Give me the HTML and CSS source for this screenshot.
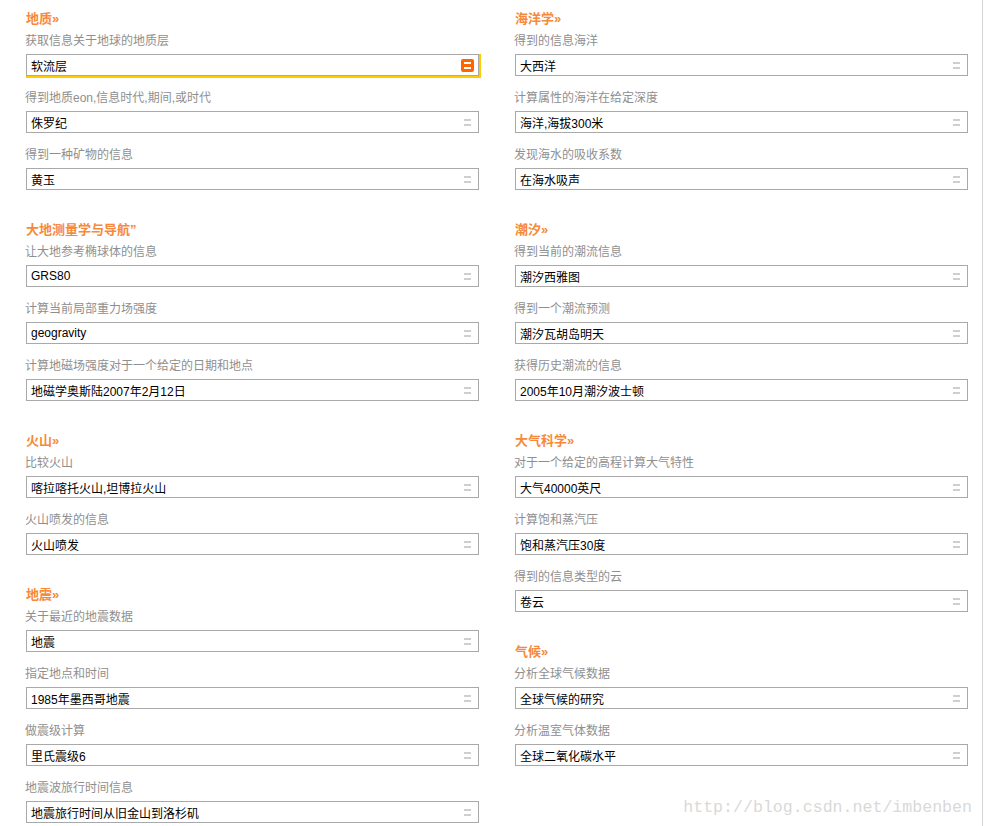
FILE: index.html
```html
<!DOCTYPE html>
<html lang="zh-CN">
<head>
    <meta charset="UTF-8">
    <title>地球科学</title>
    <link rel="stylesheet" href="styles.css">
</head>
<body>
<div class="page">
    <div class="columns">
        <div class="column">
            <div class="section">
                <h3>地质»</h3>
                <div class="field">
                    <label>获取信息关于地球的地质层</label>
                    <div class="box active"><input type="text" value="软流层"><span class="handle"></span></div>
                </div>
                <div class="field">
                    <label>得到地质eon,信息时代,期间,或时代</label>
                    <div class="box"><input type="text" value="侏罗纪"><span class="handle"></span></div>
                </div>
                <div class="field">
                    <label>得到一种矿物的信息</label>
                    <div class="box"><input type="text" value="黄玉"><span class="handle"></span></div>
                </div>
            </div>

            <div class="section">
                <h3>大地测量学与导航”</h3>
                <div class="field">
                    <label>让大地参考椭球体的信息</label>
                    <div class="box"><input type="text" value="GRS80"><span class="handle"></span></div>
                </div>
                <div class="field">
                    <label>计算当前局部重力场强度</label>
                    <div class="box"><input type="text" value="geogravity"><span class="handle"></span></div>
                </div>
                <div class="field">
                    <label>计算地磁场强度对于一个给定的日期和地点</label>
                    <div class="box"><input type="text" value="地磁学奥斯陆2007年2月12日"><span class="handle"></span></div>
                </div>
            </div>

            <div class="section">
                <h3>火山»</h3>
                <div class="field">
                    <label>比较火山</label>
                    <div class="box"><input type="text" value="喀拉喀托火山,坦博拉火山"><span class="handle"></span></div>
                </div>
                <div class="field">
                    <label>火山喷发的信息</label>
                    <div class="box"><input type="text" value="火山喷发"><span class="handle"></span></div>
                </div>
            </div>

            <div class="section">
                <h3>地震»</h3>
                <div class="field">
                    <label>关于最近的地震数据</label>
                    <div class="box"><input type="text" value="地震"><span class="handle"></span></div>
                </div>
                <div class="field">
                    <label>指定地点和时间</label>
                    <div class="box"><input type="text" value="1985年墨西哥地震"><span class="handle"></span></div>
                </div>
                <div class="field">
                    <label>做震级计算</label>
                    <div class="box"><input type="text" value="里氏震级6"><span class="handle"></span></div>
                </div>
                <div class="field">
                    <label>地震波旅行时间信息</label>
                    <div class="box"><input type="text" value="地震旅行时间从旧金山到洛杉矶"><span class="handle"></span></div>
                </div>
            </div>
        </div>

        <div class="column">
            <div class="section">
                <h3>海洋学»</h3>
                <div class="field">
                    <label>得到的信息海洋</label>
                    <div class="box"><input type="text" value="大西洋"><span class="handle"></span></div>
                </div>
                <div class="field">
                    <label>计算属性的海洋在给定深度</label>
                    <div class="box"><input type="text" value="海洋,海拔300米"><span class="handle"></span></div>
                </div>
                <div class="field">
                    <label>发现海水的吸收系数</label>
                    <div class="box"><input type="text" value="在海水吸声"><span class="handle"></span></div>
                </div>
            </div>

            <div class="section">
                <h3>潮汐»</h3>
                <div class="field">
                    <label>得到当前的潮流信息</label>
                    <div class="box"><input type="text" value="潮汐西雅图"><span class="handle"></span></div>
                </div>
                <div class="field">
                    <label>得到一个潮流预测</label>
                    <div class="box"><input type="text" value="潮汐瓦胡岛明天"><span class="handle"></span></div>
                </div>
                <div class="field">
                    <label>获得历史潮流的信息</label>
                    <div class="box"><input type="text" value="2005年10月潮汐波士顿"><span class="handle"></span></div>
                </div>
            </div>

            <div class="section">
                <h3>大气科学»</h3>
                <div class="field">
                    <label>对于一个给定的高程计算大气特性</label>
                    <div class="box"><input type="text" value="大气40000英尺"><span class="handle"></span></div>
                </div>
                <div class="field">
                    <label>计算饱和蒸汽压</label>
                    <div class="box"><input type="text" value="饱和蒸汽压30度"><span class="handle"></span></div>
                </div>
                <div class="field">
                    <label>得到的信息类型的云</label>
                    <div class="box"><input type="text" value="卷云"><span class="handle"></span></div>
                </div>
            </div>

            <div class="section">
                <h3>气候»</h3>
                <div class="field">
                    <label>分析全球气候数据</label>
                    <div class="box"><input type="text" value="全球气候的研究"><span class="handle"></span></div>
                </div>
                <div class="field">
                    <label>分析温室气体数据</label>
                    <div class="box"><input type="text" value="全球二氧化碳水平"><span class="handle"></span></div>
                </div>
            </div>
        </div>
    </div>
    <div class="watermark">http://blog.csdn.net/imbenben</div>
</div>
</body>
</html>
```

FILE: styles.css
```css
body {
    margin: 0;
    background: #fff;
    font-family: "Liberation Sans", "Noto Sans CJK SC", sans-serif;
    font-size: 12px;
    overflow: hidden;
}

.page {
    position: relative;
    box-sizing: border-box;
    width: 983px;
    height: 826px;
    padding: 10px 0 0 26px;
    border-right: 1px solid #d4d4d4;
}

.columns {
    display: grid;
    grid-template-columns: 453px 453px;
    column-gap: 36px;
}

.section {
    display: flow-root;
    margin-bottom: 18px;
}

h3 {
    margin: 0 0 4px;
    font-size: 13px;
    line-height: 18px;
    font-weight: bold;
    color: #f7893a;
}

.field {
    margin-bottom: 13px;
}

label {
    display: block;
    margin: 0 0 4px -1px;
    line-height: 18px;
    color: #8f8f8f;
}

.box {
    display: flex;
    align-items: center;
    box-sizing: border-box;
    height: 22px;
    border: 1px solid #a9a9a9;
    background: #fff;
}

.box input {
    flex: 1;
    min-width: 0;
    border: none;
    outline: none;
    padding: 0 4px;
    height: 20px;
    font-family: inherit;
    font-size: 12px;
    color: #000;
    background: transparent;
}

.handle {
    box-sizing: border-box;
    width: 7px;
    height: 7px;
    margin-right: 7px;
    border-top: 2px solid #cfcfcf;
    border-bottom: 2px solid #cfcfcf;
}

.box.active {
    box-shadow: 1px 1px 0 1px #fc0;
}

.box.active .handle {
    width: 13px;
    height: 13px;
    margin-right: 4px;
    border: none;
    border-radius: 2px;
    background: #ff6600;
    position: relative;
}

.box.active .handle::before {
    content: "";
    position: absolute;
    left: 3px;
    top: 3px;
    box-sizing: border-box;
    width: 7px;
    height: 7px;
    border-top: 2px solid #fff;
    border-bottom: 2px solid #fff;
}

.watermark {
    position: absolute;
    right: 10px;
    bottom: 9px;
    font-family: "Liberation Mono", monospace;
    font-size: 16.6px;
    color: #d9d9d9;
}
```
